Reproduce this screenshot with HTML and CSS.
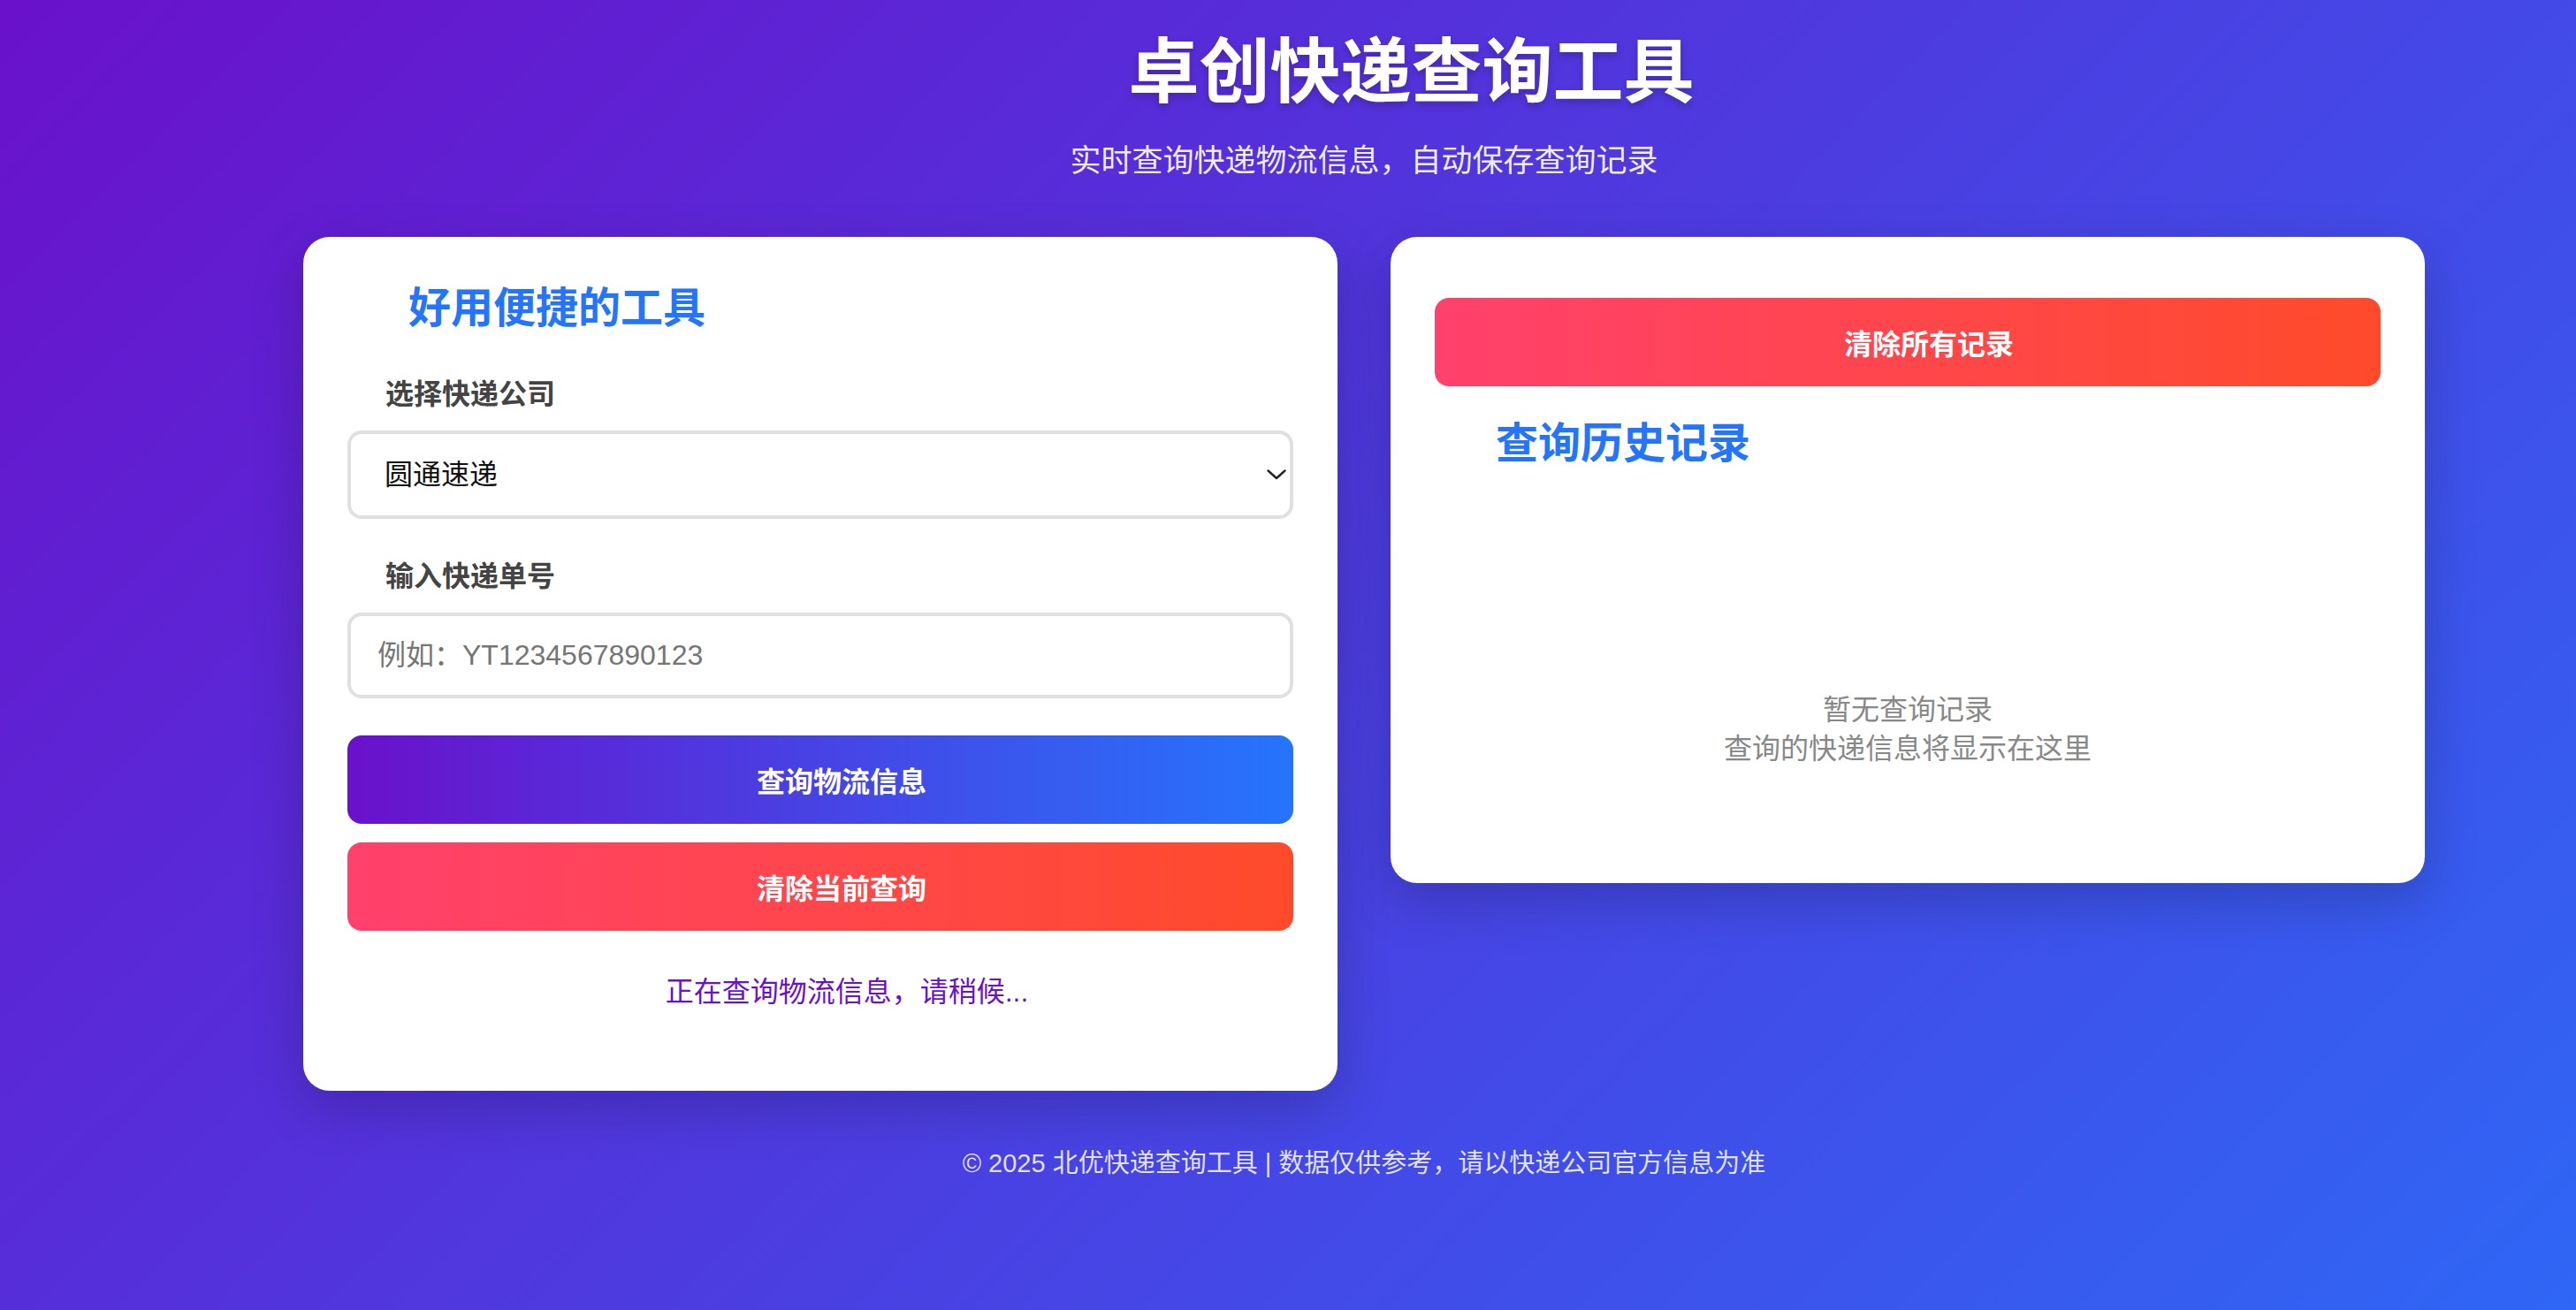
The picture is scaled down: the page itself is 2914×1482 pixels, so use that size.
FILE: index.html
```html
<!DOCTYPE html>
<html lang="zh-CN">
<head>
<meta charset="utf-8">
<title>卓创快递查询工具</title>
<link rel="stylesheet" href="styles.css">
</head>
<body>
<div class="page">
  <div class="container">
    <header class="header">
      <h1 class="title"><span class="ico ico-title"></span>卓创快递查询工具</h1>
      <p class="subtitle">实时查询快递物流信息，自动保存查询记录</p>
    </header>

    <main class="grid">
      <section class="card">
        <h2 class="card-title"><span class="ico ico-h2"></span>好用便捷的工具</h2>
        <div class="field">
          <label class="label"><span class="ico ico-label"></span>选择快递公司</label>
          <div class="select-wrap">
            <select class="control select">
              <option>圆通速递</option>
              <option>中通快递</option>
              <option>申通快递</option>
              <option>韵达快递</option>
              <option>顺丰速运</option>
            </select>
            <svg class="chevron" viewBox="0 0 22 12" width="22" height="12" aria-hidden="true">
              <path d="M1.5 1.5 L11 10 L20.5 1.5" fill="none" stroke="#222" stroke-width="2.4" stroke-linecap="round" stroke-linejoin="round"/>
            </svg>
          </div>
        </div>
        <div class="field">
          <label class="label"><span class="ico ico-label"></span>输入快递单号</label>
          <input class="control input" type="text" placeholder="例如：YT1234567890123">
        </div>
        <button class="btn btn-primary"><span class="ico ico-btn"></span>查询物流信息</button>
        <button class="btn btn-danger btn-second"><span class="ico ico-btn"></span>清除当前查询</button>
        <div class="status"><span class="ico ico-status"></span>正在查询物流信息，请稍候...</div>
      </section>

      <section class="card">
        <button class="btn btn-danger btn-clear-all"><span class="ico ico-btn"></span>清除所有记录</button>
        <h2 class="card-title history-title"><span class="ico ico-h2"></span>查询历史记录</h2>
        <div class="empty">
          <div class="empty-icon"></div>
          <p class="empty-text">暂无查询记录<br>查询的快递信息将显示在这里</p>
        </div>
      </section>
    </main>

    <footer class="footer">© 2025 北优快递查询工具 | 数据仅供参考，请以快递公司官方信息为准</footer>
  </div>
</div>
</body>
</html>
```

FILE: styles.css
```css
* {
  box-sizing: border-box;
}

html, body {
  margin: 0;
  padding: 0;
}

body {
  min-height: 1482px;
  background: linear-gradient(135deg, #6a11cb 0%, #2575fc 117%);
  font-family: "Liberation Sans", "Noto Sans CJK SC", sans-serif;
  color: #333;
}

.page {
  padding: 34px 0 40px 172px;
}

.container {
  max-width: 2400px;
  margin: 0 auto;
}

.header {
  text-align: center;
  color: #fff;
}

.title {
  margin: 0;
  font-size: 80px;
  line-height: 96px;
  font-weight: 700;
  text-shadow: 0 4px 8px rgba(0, 0, 0, 0.2);
}

.subtitle {
  margin: 26px 0 0;
  font-size: 35px;
  line-height: 52px;
  color: rgba(255, 255, 255, 0.92);
}

.ico {
  display: inline-block;
  height: 1px;
  vertical-align: middle;
}

.ico-title { width: 107px; }
.ico-h2 { width: 69px; }
.ico-label { width: 43px; }
.ico-btn { width: 48px; }
.ico-status { width: 60px; }

.grid {
  margin-top: 60px;
  display: grid;
  grid-template-columns: 1fr 1fr;
  gap: 60px;
  align-items: start;
}

.card {
  background: #fff;
  border-radius: 30px;
  padding: 50px;
  box-shadow: 0 20px 60px rgba(0, 0, 0, 0.2);
}

.card-title {
  margin: 0 0 42px;
  font-size: 48px;
  line-height: 62px;
  font-weight: 700;
  color: #2575fc;
}

.field + .field {
  margin-top: 41px;
}

.label {
  display: block;
  margin-bottom: 17px;
  font-size: 32px;
  line-height: 48px;
  font-weight: 700;
  color: #444;
}

.select-wrap {
  position: relative;
}

.control {
  display: block;
  width: 100%;
  border: 4px solid #e0e0e0;
  border-radius: 16px;
  background: #fff;
  font-family: "Liberation Sans", "Noto Sans CJK SC", sans-serif;
  font-size: 32px;
  color: #111;
  outline: none;
}

.select {
  height: 100px;
  padding: 0 60px 0 38px;
  appearance: none;
  -webkit-appearance: none;
}

.chevron {
  position: absolute;
  right: 8px;
  top: 44px;
}

.input {
  height: 97px;
  padding: 0 30px;
}

.input::placeholder {
  color: #757575;
}

.btn {
  display: block;
  width: 100%;
  height: 100px;
  border: none;
  border-radius: 16px;
  font-family: "Liberation Sans", "Noto Sans CJK SC", sans-serif;
  font-size: 32px;
  font-weight: 700;
  color: #fff;
  cursor: pointer;
}

.btn-primary {
  margin-top: 42px;
  background: linear-gradient(90deg, #6a11cb 0%, #2575fc 100%);
}

.btn-danger {
  background: linear-gradient(90deg, #ff416c 0%, #ff4b2b 100%);
}

.btn-second {
  margin-top: 21px;
}

.btn-clear-all {
  margin-top: 19px;
}

.status {
  margin: 45px 0 38px;
  text-align: center;
  font-size: 32px;
  line-height: 48px;
  color: #6a11cb;
}

.history-title {
  margin: 34px 0 0;
}

.empty {
  padding: 80px 0;
  text-align: center;
}

.empty-icon {
  height: 168px;
}

.empty-text {
  margin: 0;
  font-size: 32px;
  line-height: 44px;
  color: #888;
}

.footer {
  margin-top: 60px;
  text-align: center;
  font-size: 29px;
  line-height: 44px;
  color: rgba(255, 255, 255, 0.85);
}
```
